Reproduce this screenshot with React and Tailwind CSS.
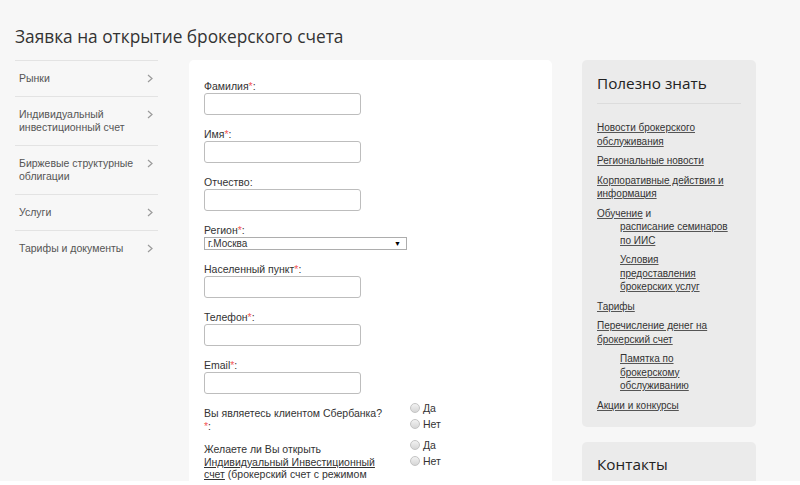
import React from 'react'

const navItems = [
    ['Рынки'],
    ['Индивидуальный', 'инвестиционный счет'],
    ['Биржевые структурные', 'облигации'],
    ['Услуги'],
    ['Тарифы и документы'],
]

const Chevron = () => (
    <svg width="6" height="9" viewBox="0 0 6 9" className="shrink-0">
        <polyline points="1,1 5,4.5 1,8" fill="none" stroke="#9a9a9a" strokeWidth="1.2" />
    </svg>
)

const Star = () => <span className="text-[#f35b5b]">*</span>

const Field = ({ label, required = true }) => (
    <div className="mb-[13px]">
        <div className="leading-[13px]">
            {label}
            {required && <Star />}:
        </div>
        <div className="h-[22px] w-[157px] rounded-[3px] border border-[#bdbdbd] bg-white" />
    </div>
)

const Radio = ({ text }) => (
    <div className="flex h-[16px] items-center gap-[3px]">
        <span className="h-[10px] w-[10px] rounded-full border border-[#c4c4c4] bg-gradient-to-b from-[#f2f2f2] to-[#d6d6d6]" />
        <span>{text}</span>
    </div>
)

const Link = ({ children }) => <a className="underline decoration-[#555] underline-offset-[1px]">{children}</a>

const App = () => {
    return (
        <div className="h-[481px] overflow-hidden bg-[#f7f7f7] px-[15px] text-[#333] font-['Liberation_Sans',Arial,sans-serif]">
            <h1 className="pt-[24px] text-[17.3px] leading-[26px] text-[#333] font-['Open_Sans',sans-serif]">
                Заявка на открытие брокерского счета
            </h1>

            <div className="mt-[10px] flex items-start">
                {/* left menu */}
                <nav className="w-[143px] text-[10.5px] text-[#555]">
                    {navItems.map((lines, i) => (
                        <div key={i} className="flex items-start justify-between border-t border-[#e3e3e3] py-[11px] pl-[4px] pr-[5px]">
                            <div className="leading-[13px]">
                                {lines.map((l) => (
                                    <div key={l}>{l}</div>
                                ))}
                            </div>
                            <div className="mt-[2px]">
                                <Chevron />
                            </div>
                        </div>
                    ))}
                </nav>

                {/* form */}
                <div className="ml-[31px] h-[440px] w-[363px] rounded-[5px] bg-white pl-[15px] pt-[20px] text-[10.5px] text-[#333]">
                    <Field label="Фамилия" />
                    <Field label="Имя" />
                    <Field label="Отчество" required={false} />

                    <div className="mb-[13px]">
                        <div className="leading-[13px]">
                            Регион<Star />:
                        </div>
                        <div className="flex h-[13px] w-[203px] items-center justify-between border border-[#adadad] bg-white pl-[3px] pr-[5px] text-[10px] leading-none">
                            <span>г.Москва</span>
                            <span className="text-[7px] text-black">▼</span>
                        </div>
                    </div>

                    <Field label="Населенный пункт" />
                    <Field label="Телефон" />
                    <div className="mb-[6px]">
                        <div className="leading-[13px]">
                            Email<Star />:
                        </div>
                        <div className="h-[22px] w-[157px] rounded-[3px] border border-[#bdbdbd] bg-white" />
                    </div>

                    <div className="mb-[5px] flex items-start">
                        <div className="w-[187px] pt-[7px] leading-[12.5px]">
                            Вы являетесь клиентом Сбербанка? <Star />:
                        </div>
                        <div className="ml-[19px] leading-[16px]">
                            <Radio text="Да" />
                            <Radio text="Нет" />
                        </div>
                    </div>

                    <div className="flex items-start">
                        <div className="w-[187px] pt-[6px] leading-[12.5px]">
                            Желаете ли Вы открыть{' '}
                            <span className="underline">Индивидуальный Инвестиционный счет</span> (брокерский счет с режимом
                        </div>
                        <div className="ml-[19px] leading-[16px]">
                            <Radio text="Да" />
                            <Radio text="Нет" />
                        </div>
                    </div>
                </div>

                {/* right column */}
                <div className="ml-[30px] w-[174px]">
                    <div className="rounded-[5px] bg-[#ebebeb] px-[15px] pb-[15px] pt-[13px]">
                        <div className="text-[15.3px] leading-[20px] text-[#222] font-['Open_Sans',sans-serif]">Полезно знать</div>
                        <div className="mt-[10px] border-t border-[#dcdcdc]" />
                        <div className="mt-[17px] flex flex-col gap-[6px] text-[10px] leading-[13.5px] text-[#333]">
                            <div><Link>Новости брокерского обслуживания</Link></div>
                            <div><Link>Региональные новости</Link></div>
                            <div><Link>Корпоративные действия и информация</Link></div>
                            <div>
                                <div><Link>Обучение</Link> и</div>
                                <div className="w-[108px] pl-[23px] box-content">
                                    <div><Link>расписание семинаров по ИИС</Link></div>
                                    <div className="mt-[6px]"><Link>Условия предоставления брокерских услуг</Link></div>
                                </div>
                            </div>
                            <div><Link>Тарифы</Link></div>
                            <div><Link>Перечисление денег на брокерский счет</Link></div>
                            <div className="w-[108px] pl-[23px] box-content"><Link>Памятка по брокерскому обслуживанию</Link></div>
                            <div><Link>Акции и конкурсы</Link></div>
                        </div>
                    </div>

                    <div className="mt-[15px] h-[60px] rounded-[5px] bg-[#ebebeb] px-[15px] pt-[12px]">
                        <div className="text-[15.3px] leading-[20px] text-[#222] font-['Open_Sans',sans-serif]">Контакты</div>
                    </div>
                </div>
            </div>
        </div>
    )
}

export default App
